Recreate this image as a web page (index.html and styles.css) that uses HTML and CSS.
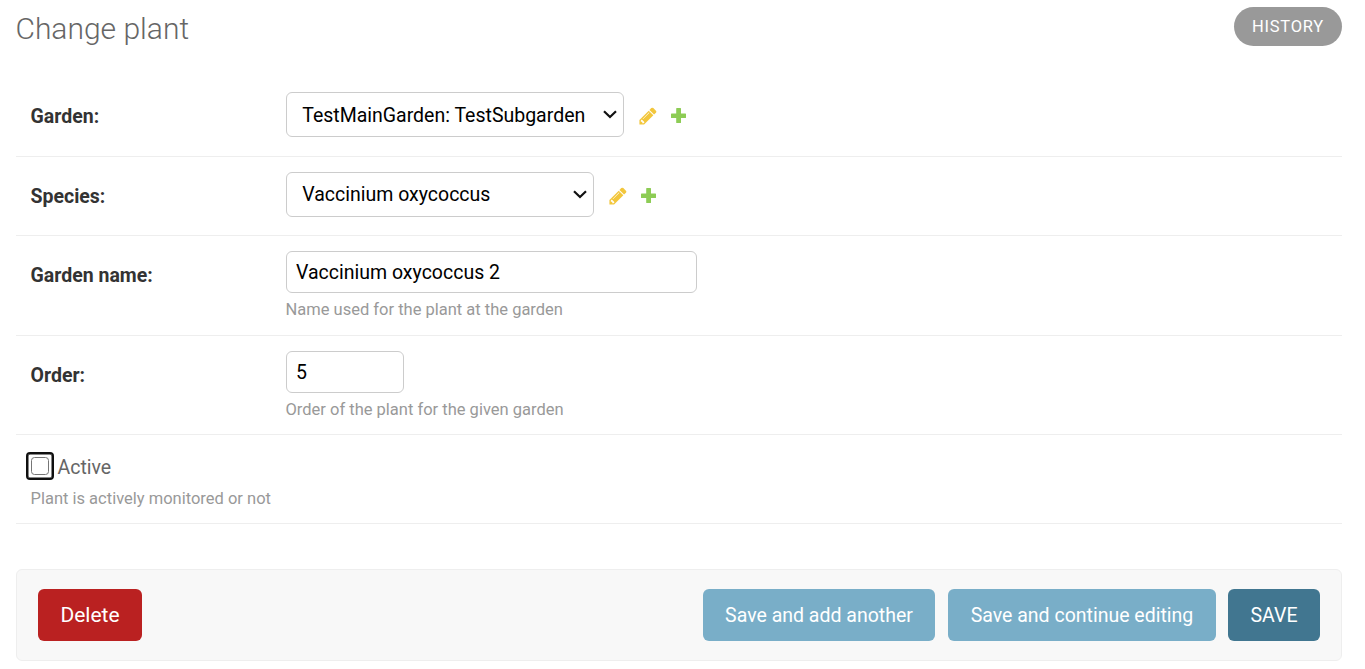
FILE: index.html
```html
<!DOCTYPE html>
<html lang="en">
<head>
<meta charset="utf-8">
<title>Change plant</title>
<link rel="stylesheet" href="styles.css">
</head>
<body>
<svg class="sprite" width="0" height="0" aria-hidden="true">
  <symbol id="pencil" viewBox="0 0 1792 1792"><path fill="#efb80b" fill-opacity=".8" d="M491 1536l91-91-235-235-91 91v107h128v128h107zm523-928q0-22-22-22-10 0-17 7l-542 542q-7 7-7 17 0 22 22 22 10 0 17-7l542-542q7-7 7-17zm-54-192l416 416-832 832h-416v-416zm683 96q0 53-37 90l-166 166-416-416 166-165q36-38 90-38 53 0 91 38l235 234q37 39 37 91z"/></symbol>
  <symbol id="plus" viewBox="0 0 15 15"><path fill="#70bf2b" fill-opacity=".8" d="M5.8 0h3.6q.6 0 .6.6V5.4h4.4q.6 0 .6.6v3.4q0 .6-.6.6H10v4.4q0 .6-.6.6H5.8q-.6 0-.6-.6V10H.6q-.6 0-.6-.6V6q0-.6.6-.6h4.6V.6q0-.6.6-.6z"/></symbol>
  <symbol id="chevron" viewBox="0 0 14 9"><path fill="none" stroke="#111" stroke-width="2.2" d="M1 1.2l6 5.8 6-5.8"/></symbol>
</svg>
<main class="content">
  <header class="header">
    <h1 class="title">Change plant</h1>
    <a class="history">HISTORY</a>
  </header>
  <form>
    <div class="row row-garden">
      <label class="label" for="garden">Garden:</label>
      <div class="field related">
        <div class="select-wrap wide">
          <select class="select" id="garden"><option>TestMainGarden: TestSubgarden</option></select>
          <svg class="chevron"><use href="#chevron"/></svg>
        </div>
        <svg class="pencil"><use href="#pencil"/></svg>
        <svg class="plus"><use href="#plus"/></svg>
      </div>
    </div>
    <div class="row row-species">
      <label class="label" for="species">Species:</label>
      <div class="field related">
        <div class="select-wrap narrow">
          <select class="select" id="species"><option>Vaccinium oxycoccus</option></select>
          <svg class="chevron"><use href="#chevron"/></svg>
        </div>
        <svg class="pencil"><use href="#pencil"/></svg>
        <svg class="plus"><use href="#plus"/></svg>
      </div>
    </div>
    <div class="row row-name">
      <label class="label" for="name">Garden name:</label>
      <div class="field">
        <input class="input" id="name" type="text" value="Vaccinium oxycoccus 2">
        <div class="help">Name used for the plant at the garden</div>
      </div>
    </div>
    <div class="row row-order">
      <label class="label" for="order">Order:</label>
      <div class="field">
        <input class="input short" id="order" type="text" value="5">
        <div class="help">Order of the plant for the given garden</div>
      </div>
    </div>
    <div class="row row-active">
      <label class="check"><span class="focus-ring"><input class="checkbox" type="checkbox"></span><span class="check-text">Active</span></label>
      <div class="help active-help">Plant is actively monitored or not</div>
    </div>
    <div class="submit-row">
      <a class="button delete">Delete</a>
      <button class="button another" type="button">Save and add another</button>
      <button class="button continue" type="button">Save and continue editing</button>
      <button class="button save" type="button">SAVE</button>
    </div>
  </form>
</main>
</body>
</html>
```
FILE: styles.css
```css
* { box-sizing: border-box; }
body {
  margin: 0;
  background: #fff;
  color: #333;
  font: 19.5px/24px Roboto, "Liberation Sans", sans-serif;
  overflow: hidden;
}
.sprite { display: none; }
.content { padding: 7px 23px 0 16px; }
.header { display: flex; justify-content: space-between; height: 70px; }
.title {
  margin: 4px 0 0 -.6px;
  font-size: 30px;
  line-height: 36px;
  font-weight: 300;
  color: #666;
}
.history {
  width: 108px;
  height: 39px;
  border-radius: 20px;
  background: #999;
  color: #fff;
  font-size: 16.5px;
  line-height: 39px;
  letter-spacing: .75px;
  text-align: center;
}
.row { display: flex; padding: 15px 15px 0; border-bottom: 1px solid #eee; }
.row-garden { height: 80px; }
.row-species { height: 79px; }
.row-name { height: 100px; }
.row-order { height: 99px; }
.row-active { display: block; height: 89px; }
.label { width: 255.5px; margin-left: -.5px; padding-top: 13px; font-weight: 700; }
.related { display: flex; align-items: flex-start; height: 45px; }
.select-wrap { position: relative; height: 45px; }
.wide { width: 338px; }
.narrow { width: 308px; }
.select, .input {
  display: block;
  width: 100%;
  margin: 0;
  border: 1px solid #ccc;
  border-radius: 6px;
  background: #fff;
  color: #000;
  font-family: Roboto, "Liberation Sans", sans-serif;
  font-size: 19.5px;
}
.select { height: 45px; padding: 0 30px 0 15.2px; appearance: none; outline: 0; }
.row-garden .select { padding-top: 1px; }
.chevron { position: absolute; right: 7px; top: 18px; width: 14px; height: 9px; pointer-events: none; }
.pencil { width: 20px; height: 20px; margin: 14px 0 0 14px; }
.plus { width: 15px; height: 15px; margin: 16px 0 0 13px; }
.input { width: 411px; height: 42px; padding: 0 9px; }
.short { width: 118px; }
.help { margin: 6px 0 0 -.5px; color: #999; font-size: 16.5px; line-height: 21px; }
.active-help { margin-top: 7px; }
.check { display: flex; align-items: center; height: 31px; color: #666; }
.check-text { padding-top: 4px; }
.focus-ring {
  display: flex;
  align-items: center;
  justify-content: center;
  width: 28px;
  height: 28px;
  margin: 0 3.5px 0 -5px;
  border: 2px solid #101010;
  border-radius: 4px;
  box-shadow: inset 0 0 0 .5px #101010;
}
.checkbox {
  appearance: none;
  width: 18px;
  height: 18px;
  margin: 0;
  border: 1px solid #767676;
  border-radius: 3.5px;
  outline: 0;
}
.submit-row {
  display: flex;
  height: 92px;
  margin-top: 45px;
  padding: 19px 21px;
  border: 1px solid #eee;
  border-radius: 6px;
  background: #f8f8f8;
}
.button {
  height: 52px;
  padding: 2px 0 0;
  border: 0;
  border-radius: 6px;
  color: #fff;
  font: 19.5px/50px Roboto, "Liberation Sans", sans-serif;
  text-align: center;
}
.delete { width: 104px; margin-right: auto; background: #ba2121; font-size: 21px; padding-top: 1px; }
.another { width: 232px; background: #79aec8; }
.continue { width: 268px; margin-left: 13px; background: #79aec8; }
.save { width: 92px; margin-left: 12px; background: #417690; }
```
